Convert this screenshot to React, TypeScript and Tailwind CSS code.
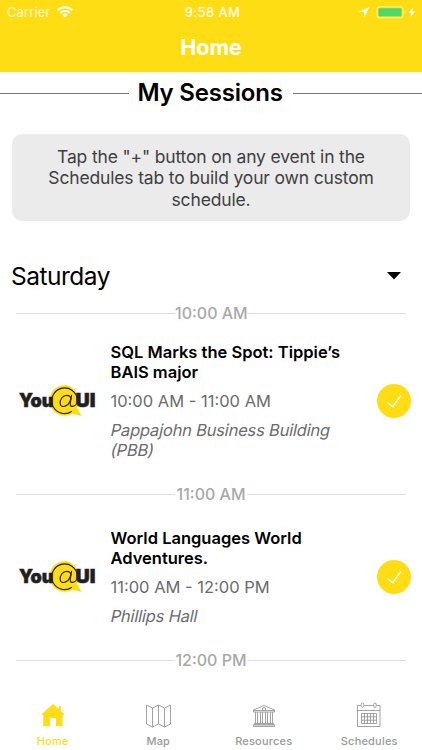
import { ReactNode } from "react";

const sessions = [
  {
    slot: "10:00 AM",
    title: ["SQL Marks the Spot: Tippie’s", "BAIS major"],
    time: "10:00 AM - 11:00 AM",
    place: ["Pappajohn Business Building", "(PBB)"],
  },
  {
    slot: "11:00 AM",
    title: ["World Languages World", "Adventures."],
    time: "11:00 AM - 12:00 PM",
    place: ["Phillips Hall"],
  },
];

function Lines({ lines, className = "block" }: { lines: string[]; className?: string }) {
  return (
    <>
      {lines.map((l) => (
        <span key={l} className={`whitespace-nowrap ${className}`}>{l}</span>
      ))}
    </>
  );
}

function StatusBar() {
  return (
    <div className="h-6 flex items-center justify-between pl-[7px] pr-[6px] text-[13px] leading-6 text-white">
      <div className="flex items-center gap-[7px] w-[120px]">
        <span className="tracking-[0.1px] opacity-80">Carrier</span>
        <svg width="16" height="12" viewBox="0 0 16 12" fill="none" stroke="#fff" strokeWidth="2">
          <path d="M0.8 4.3a10.2 10.2 0 0 1 14.4 0" />
          <path d="M3.3 7a6.7 6.7 0 0 1 9.4 0" />
          <path d="M8 11.6 5.3 8.9a3.9 3.9 0 0 1 5.4 0Z" fill="#fff" stroke="none" />
        </svg>
      </div>
      <span className="pl-[2px] font-medium tracking-[0.4px] opacity-90">9:58 AM</span>
      <div className="flex items-center justify-end w-[120px]">
        <svg width="58" height="14" viewBox="0 0 58 14">
          <path d="M0.5 7.1 11.3 2 6.2 12.6V7.1Z" fill="#fff" />
          <rect x="19" y="1.8" width="26" height="11" rx="2.4" fill="none" stroke="#fff" strokeOpacity="0.6" />
          <rect x="20.5" y="3.3" width="23" height="8" rx="1" fill="#4cd964" />
          <path d="M46.5 5.5c1.2.4 1.2 3.2 0 3.6Z" fill="#fff" fillOpacity="0.6" />
          <path d="M54.8 2.5 50.9 7.9h2.6L52.3 12 57 6.4h-2.7Z" fill="#fff" />
        </svg>
      </div>
    </div>
  );
}

function TimeDivider({ label }: { label: string }) {
  return (
    <div className="flex items-center h-5 mx-4">
      <div className="flex-1 h-px bg-[#dedede]" />
      <span className="w-[72px] text-center whitespace-nowrap text-[16px] leading-5 font-medium text-[#a9a9a9]">{label}</span>
      <div className="flex-1 h-px bg-[#dedede]" />
    </div>
  );
}

function YouAtUI() {
  return (
    <svg width="80" height="34" viewBox="0 0 80 34" className="block" fontFamily="Inter, sans-serif">
      <path d="M47 1a15.400 15.400 0 1 0 7.500 28.800L63.500 32l-4.500-8.600A15.400 15.400 0 0 0 47 1Z" fill="#ffdd15" />
      <g fontSize="18.5" fontWeight="900" fill="#231f20" stroke="#231f20" strokeWidth="0.5">
        <text x="1" y="23" textLength="34.5" lengthAdjust="spacingAndGlyphs">You</text>
        <text x="57.5" y="23" textLength="20" lengthAdjust="spacingAndGlyphs">UI</text>
      </g>
      <g fill="none" stroke="#231f20" strokeWidth="1.1" strokeLinecap="round">
        <path d="M53.5 27.500A12.800 12.800 0 1 1 59.300 15.500C59.300 20.500 56.500 22.400 54.200 22.400C52 22.400 52 20.700 52.400 18.500L53.600 11.200" />
        <path d="M53 14.800C52.200 10.300 46.500 10.500 43.700 14.100C40.700 18.200 42 22.700 45.500 22.500C48.800 22.300 51.300 19.500 52.600 15.500" />
      </g>
    </svg>
  );
}

function Session({ title, time, place, className }: { title: string[]; time: string; place: string[]; className: string }) {
  return (
    <div className={`flex items-center ${className}`}>
      <div className="w-[110.5px] pl-[17.5px]">
        <YouAtUI />
      </div>
      <div className="flex-1 text-[16.5px]">
        <h3 className="leading-5 font-semibold text-black">
          <Lines lines={title} />
        </h3>
        <p className="mt-[9px] leading-5 text-[#6b6b6b]">{time}</p>
        {/* slanted upright face, so the letters keep their roman shapes */}
        <p className="mt-[9px] leading-5 tracking-[-0.2px] text-[#6b6b6b]">
          <Lines lines={place} className="block w-fit -skew-x-12" />
        </p>
      </div>
      <button className="mr-[11.5px] size-[34px] rounded-full bg-[#ffdd15]" aria-label="Added">
        <svg width="34" height="34" viewBox="0 0 34 34" fill="none" stroke="#fff" strokeWidth="1.3">
          <path d="M10.500 18.300 15.800 22.700 23.800 11.500" />
        </svg>
      </button>
    </div>
  );
}

function Tab({ label, active, children }: { label: string; active?: boolean; children: ReactNode }) {
  return (
    <div className={`flex flex-1 flex-col items-center ${active ? "text-[#ffdd15]" : "text-[#999999]"}`}>
      <svg width="28" height="28" viewBox="0 0 28 28" fill="none" stroke="currentColor" strokeWidth="0.9">
        {children}
      </svg>
      <span className="mt-[5px] text-[11px] leading-[14px] font-medium tracking-[0.2px]">{label}</span>
    </div>
  );
}

export default function App() {
  return (
    <div className="h-[750px] w-[422px] flex flex-col overflow-hidden bg-white font-['Inter',sans-serif]">
      <header className="h-[72px] shrink-0 bg-[#ffdd15]">
        <StatusBar />
        <h1 className="text-center text-[21.5px] leading-[47px] font-bold text-white">Home</h1>
      </header>

      <div className="flex h-[42px] items-center">
        <div className="flex-1 h-px bg-[#777777]" />
        <h2 className="w-[164px] pr-[2px] text-center whitespace-nowrap text-[24px] font-semibold tracking-[-0.2px] text-black">My Sessions</h2>
        <div className="flex-1 h-px bg-[#777777]" />
      </div>

      <div className="mx-3 mt-5 h-[87px] w-[398px] shrink-0 rounded-[10px] bg-[#ebebeb] pt-[12px] text-center text-[17.5px] leading-[21.3px] tracking-[-0.16px] text-[#404040]">
        <Lines lines={['Tap the "+" button on any event in the', "Schedules tab to build your own custom", "schedule."]} />
      </div>

      <div className="mt-[35px] flex h-10 items-center justify-between pl-[11px] pr-[21px]">
        <h2 className="text-[24.5px] tracking-[-0.5px] text-black">Saturday</h2>
        <svg width="14" height="8" viewBox="0 0 14 8">
          <path d="M0 0H14L7 7.500Z" fill="#000" />
        </svg>
      </div>

      <main className="mt-[7px]">
        <TimeDivider label={sessions[0].slot} />
        <Session {...sessions[0]} className="h-[155px]" />
        <div className="h-[6px]" />
        <TimeDivider label={sessions[1].slot} />
        <Session {...sessions[1]} className="h-[146px]" />
        <TimeDivider label="12:00 PM" />
      </main>

      <nav className="mt-auto flex h-[49px] shrink-0">
        <Tab label="Home" active>
          <path d="M14 3 2.800 13l.8 1H4.300v11.300H11V17h6v8.300h6.500V14h.8l.9-1-3.200-2.900V5.500l-2-.5v2.900Z" fill="currentColor" stroke="none" />
        </Tab>
        <Tab label="Map">
          <path d="M2.500 4 8.500 7l6-3 6 3 6-3v19l-6 3-6-3-6 3-6-3ZM8.500 7v19M14.500 4v19M20.500 7v19" />
        </Tab>
        <Tab label="Resources">
          <path d="M3.500 11V9L14 4.500 24.500 9v2ZM3.500 9.500h21M4.500 22.500h19v1.300h-19ZM3.500 23.800h21v1.700h-21Z" />
          <circle cx="14" cy="8" r="1.5" />
          <path d="M5.500 11v11.500M7.500 11v11.500M10.500 11v11.500M12.500 11v11.500M15.500 11v11.500M17.500 11v11.500M20.500 11v11.500M22.500 11v11.500" />
        </Tab>
        <Tab label="Schedules">
          <path d="M5.800 4.500H2.500V25.500h22.500V4.500H21.500M9 4.500h9.500M2.500 9.500h22.500" />
          <rect x="6.200" y="2" width="2.500" height="4.500" rx="1.2" />
          <rect x="18.700" y="2" width="2.500" height="4.500" rx="1.2" />
          <path d="M6.500 12.500h15v10h-15ZM9.500 12.500v10M12.500 12.500v10M15.500 12.500v10M18.500 12.500v10M6.500 15.800h15M6.500 19.200h15" />
        </Tab>
      </nav>
    </div>
  );
}
